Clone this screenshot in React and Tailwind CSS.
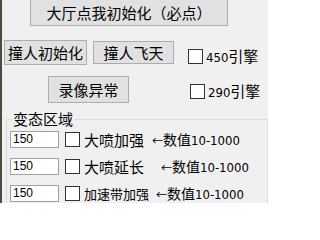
const CJK = { fontFamily: '"Noto Sans CJK SC", "Microsoft YaHei", sans-serif' }
const NUM = { fontFamily: '"DejaVu Sans Condensed", "Liberation Sans", sans-serif' }

function Btn({ className = '', children }) {
  return (
    <div
      className={`flex items-center justify-center bg-[#e1e1e1] border border-[#adadad] text-[15px] text-black leading-none ${className}`}
    >
      {children}
    </div>
  )
}

function Box({ className = '' }) {
  return <div className={`w-[15px] h-[15px] bg-white border border-[#333] shrink-0 ${className}`} />
}

function Engine({ label }) {
  return (
    <div className="flex items-center gap-[3px]">
      <Box />
      <span className="text-[15px] leading-none text-black">
        <span className="text-[13px]" style={NUM}>{label}</span>引擎
      </span>
    </div>
  )
}

const ROWS = [
  { name: '大喷加强', size: 'text-[15px]', arrowGap: 'ml-[8px]' },
  { name: '大喷延长', size: 'text-[15px]', arrowGap: 'ml-[17px]' },
  { name: '加速带加强', size: 'text-[13px]', arrowGap: 'ml-[7px]' },
]

export default function App() {
  return (
    <div className="w-[268px] h-[203px] overflow-hidden bg-[#f0f0f0] flex" style={CJK}>
      {/* window edge */}
      <div className="w-[2px] bg-[#4b4d42] shrink-0" />

      <div className="flex-1 flex flex-col">
        {/* top button */}
        <Btn className="ml-[28px] w-[198px] h-[26px] border-t-0 shrink-0">大厅点我初始化（必点）</Btn>

        {/* buttons row */}
        <div className="flex items-start mt-[14px] ml-[2px] shrink-0">
          <Btn className="w-[83px] h-[25px]">撞人初始化</Btn>
          <Btn className="w-[81px] h-[23px] ml-[6px] mt-[1px]">撞人飞天</Btn>
          <div className="ml-[14px] mt-[8px]"><Engine label="450" /></div>
        </div>

        <div className="flex items-start mt-[11px] shrink-0">
          <Btn className="w-[81px] h-[27px] ml-[46px]">录像异常</Btn>
          <div className="ml-[61px] mt-[7px]"><Engine label="290" /></div>
        </div>

        {/* group box */}
        <fieldset className="ml-[4px] mt-[8px] border border-[#dcdcdc] h-[110px] shrink-0">
          <legend className="ml-[4px] px-[2px] text-[15px] leading-[16px] text-black">变态区域</legend>
          <div className="flex flex-col gap-[10px] mt-[4px] ml-[3px]">
            {ROWS.map((r) => (
              <div key={r.name} className="flex items-center h-[17px]">
                <div
                  className="w-[49px] h-[17px] bg-white border border-[#a0a0a0] text-[12px] leading-[15px] pl-[2px] text-black"
                  style={{ fontFamily: '"Liberation Sans", sans-serif' }}
                >
                  150
                </div>
                <Box className="ml-[6px]" />
                <span className={`ml-[4px] ${r.size} leading-none text-black`}>{r.name}</span>
                <span className={`${r.arrowGap} text-[14px] leading-none text-black whitespace-nowrap`}>
                  <span className="text-[11px]">←</span>数值
                  <span className="text-[13px]" style={NUM}>10-1000</span>
                </span>
              </div>
            ))}
          </div>
        </fieldset>
      </div>
    </div>
  )
}
